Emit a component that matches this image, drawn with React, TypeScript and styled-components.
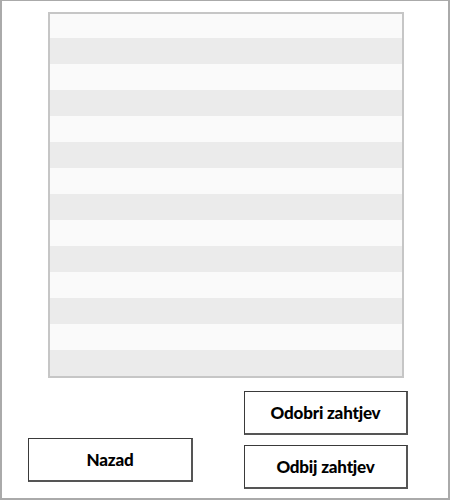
import React from "react";
import styled, { createGlobalStyle } from "styled-components";

const Global = createGlobalStyle`
  html, body { margin: 0; padding: 0; background: #fff; }
  * { box-sizing: border-box; }
`;

const Frame = styled.div`
  width: 450px;
  height: 500px;
  border: 1px solid #aaa;
  border-left-width: 2px;
  border-right-width: 2px;
  border-bottom-width: 2px;
  padding-top: 11px;
  display: flex;
  flex-direction: column;
  background: #fff;
`;

const Table = styled.div`
  margin-left: 46px;
  width: 356px;
  height: 366px;
  display: flex;
  flex-direction: column;
  outline: 2px solid #c6c6c6;
  outline-offset: -2px;
  background: #fafafa;
  overflow: hidden;
`;

const Row = styled.div<{ $alt: boolean }>`
  height: 26px;
  flex: none;
  background: ${(p) => (p.$alt ? "#ebebeb" : "#fafafa")};
`;

const Footer = styled.div`
  display: flex;
  align-items: flex-end;
  margin-top: 13px;
`;

const Button = styled.button`
  height: 44px;
  background: #fff;
  border: 1px solid #3a3a3a;
  border-right-width: 2px;
  border-bottom-width: 2px;
  border-right-color: #555;
  border-bottom-color: #555;
  font-family: Lato, "Open Sans", sans-serif;
  font-weight: 900;
  font-size: 17px;
  letter-spacing: -0.2px;
  color: #000;
  padding: 0;
  cursor: pointer;
`;

const BackButton = styled(Button)`
  width: 165px;
  margin-left: 26px;
  margin-bottom: 7px;
`;

const ActionColumn = styled.div`
  display: flex;
  flex-direction: column;
  gap: 10px;
  margin-left: 51px;
`;

const ActionButton = styled(Button)`
  width: 164px;
`;

export default function App() {
  return (
    <>
      <Global />
      <Frame>
        <Table>
          {Array.from({ length: 14 }, (_, i) => (
            <Row key={i} $alt={i % 2 === 1} />
          ))}
        </Table>
        <Footer>
          <BackButton>Nazad</BackButton>
          <ActionColumn>
            <ActionButton>Odobri zahtjev</ActionButton>
            <ActionButton>Odbij zahtjev</ActionButton>
          </ActionColumn>
        </Footer>
      </Frame>
    </>
  );
}
